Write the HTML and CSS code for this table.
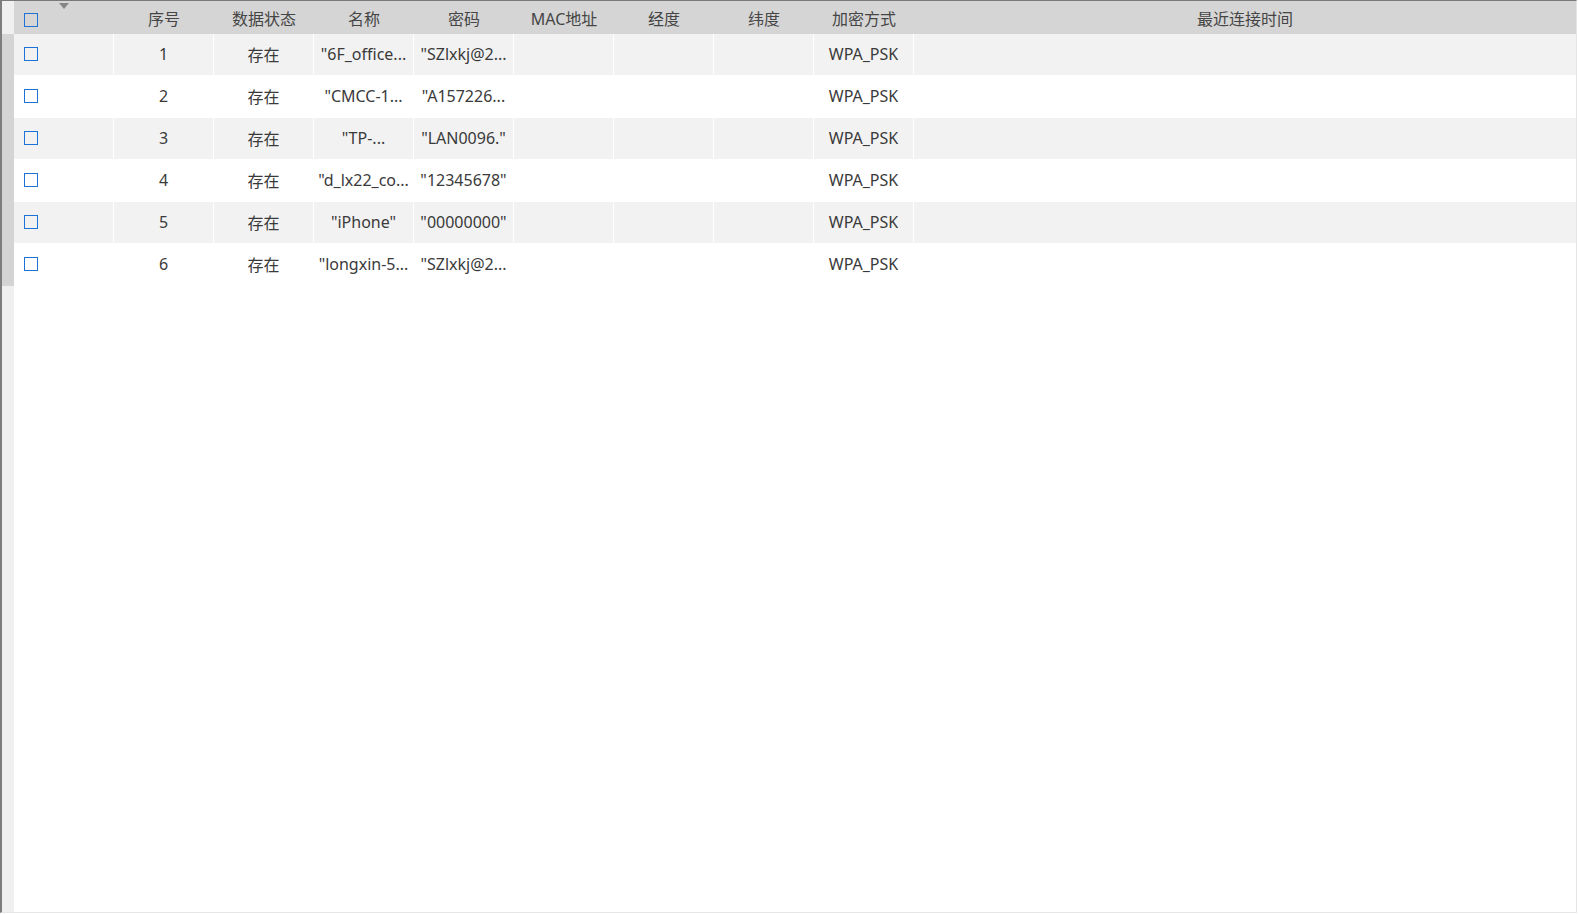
FILE: index.html
```html
<!DOCTYPE html>
<html lang="zh-CN">
<head>
<meta charset="utf-8">
<title>WiFi</title>
<link rel="stylesheet" href="styles.css">
</head>
<body>
<div class="frame">
  <div class="gutter">
    <div class="g-head"></div>
    <div class="g-rows"></div>
    <div class="g-rest"></div>
  </div>
  <div class="grid">
    <div class="head">
      <div class="hcell chk"><span class="box"></span><span class="tri"></span></div>
      <div class="hcell">序号</div>
      <div class="hcell">数据状态</div>
      <div class="hcell">名称</div>
      <div class="hcell">密码</div>
      <div class="hcell">MAC地址</div>
      <div class="hcell">经度</div>
      <div class="hcell">纬度</div>
      <div class="hcell">加密方式</div>
      <div class="hcell last">最近连接时间</div>
    </div>
    <div class="row alt">
      <div class="cell chk"><span class="box"></span></div>
      <div class="cell">1</div><div class="cell">存在</div><div class="cell">"6F_office...</div><div class="cell">"SZlxkj@2...</div><div class="cell"></div><div class="cell"></div><div class="cell"></div><div class="cell">WPA_PSK</div><div class="cell last"></div>
    </div>
    <div class="row">
      <div class="cell chk"><span class="box"></span></div>
      <div class="cell">2</div><div class="cell">存在</div><div class="cell">"CMCC-1...</div><div class="cell">"A157226...</div><div class="cell"></div><div class="cell"></div><div class="cell"></div><div class="cell">WPA_PSK</div><div class="cell last"></div>
    </div>
    <div class="row alt">
      <div class="cell chk"><span class="box"></span></div>
      <div class="cell">3</div><div class="cell">存在</div><div class="cell">"TP-...</div><div class="cell">"LAN0096."</div><div class="cell"></div><div class="cell"></div><div class="cell"></div><div class="cell">WPA_PSK</div><div class="cell last"></div>
    </div>
    <div class="row">
      <div class="cell chk"><span class="box"></span></div>
      <div class="cell">4</div><div class="cell">存在</div><div class="cell">"d_lx22_co...</div><div class="cell">"12345678"</div><div class="cell"></div><div class="cell"></div><div class="cell"></div><div class="cell">WPA_PSK</div><div class="cell last"></div>
    </div>
    <div class="row alt">
      <div class="cell chk"><span class="box"></span></div>
      <div class="cell">5</div><div class="cell">存在</div><div class="cell">"iPhone"</div><div class="cell">"00000000"</div><div class="cell"></div><div class="cell"></div><div class="cell"></div><div class="cell">WPA_PSK</div><div class="cell last"></div>
    </div>
    <div class="row">
      <div class="cell chk"><span class="box"></span></div>
      <div class="cell">6</div><div class="cell">存在</div><div class="cell">"longxin-5...</div><div class="cell">"SZlxkj@2...</div><div class="cell"></div><div class="cell"></div><div class="cell"></div><div class="cell">WPA_PSK</div><div class="cell last"></div>
    </div>
  </div>
</div>
</body>
</html>
```
FILE: styles.css
```css
html, body {
  margin: 0;
  padding: 0;
  background: #ffffff;
}
body {
  font-family: "Noto Sans", "Noto Sans CJK SC", sans-serif;
  font-size: 16px;
  color: #3a3a3a;
}
.frame {
  box-sizing: border-box;
  width: 1577px;
  height: 913px;
  border-top: 1px solid #7a7a7a;
  border-left: 2px solid #7d7d7d;
  border-right: 1px solid #e6e6e6;
  border-bottom: 1px solid #e6e6e6;
  display: flex;
  background: #ffffff;
}
.gutter {
  width: 12px;
  display: flex;
  flex-direction: column;
  flex-shrink: 0;
}
.g-head {
  height: 33px;
  background: #f0f0f0;
}
.g-rows {
  height: 252px;
  background: #d4d4d4;
}
.g-rest {
  flex: 1;
  background: #f0f0f0;
}
.grid {
  width: 1562px;
  display: flex;
  flex-direction: column;
}
.head {
  position: relative;
  display: grid;
  grid-template-columns: repeat(9, 100px) 662px;
  height: 33px;
  box-sizing: border-box;
  padding-top: 4px;
  background: #d5d5d5;
  color: #454545;
}
.hcell {
  display: flex;
  align-items: center;
  justify-content: center;
  white-space: nowrap;
  padding-bottom: 4px;
}
.hcell.chk {
  padding-bottom: 0;
}
.chk {
  justify-content: flex-start;
  padding-left: 10px;
}
.box {
  display: block;
  box-sizing: border-box;
  width: 14px;
  height: 14px;
  border: 1px solid #1c72d6;
  background: transparent;
}
.tri {
  position: absolute;
  left: 45px;
  top: 2px;
  width: 0;
  height: 0;
  border-left: 5px solid transparent;
  border-right: 5px solid transparent;
  border-top: 6px solid #858585;
}
.row {
  display: grid;
  grid-template-columns: repeat(9, 100px) 662px;
  height: 42px;
  box-sizing: border-box;
  border-bottom: 1px solid #ffffff;
  background: #ffffff;
}
.row.alt {
  background: #f2f2f2;
}
.cell {
  display: flex;
  align-items: center;
  justify-content: center;
  white-space: nowrap;
  overflow: hidden;
  border-right: 1px solid #ffffff;
  padding-bottom: 1px;
}
.cell.last {
  border-right: none;
}
.cell.chk {
  justify-content: flex-start;
}
```
